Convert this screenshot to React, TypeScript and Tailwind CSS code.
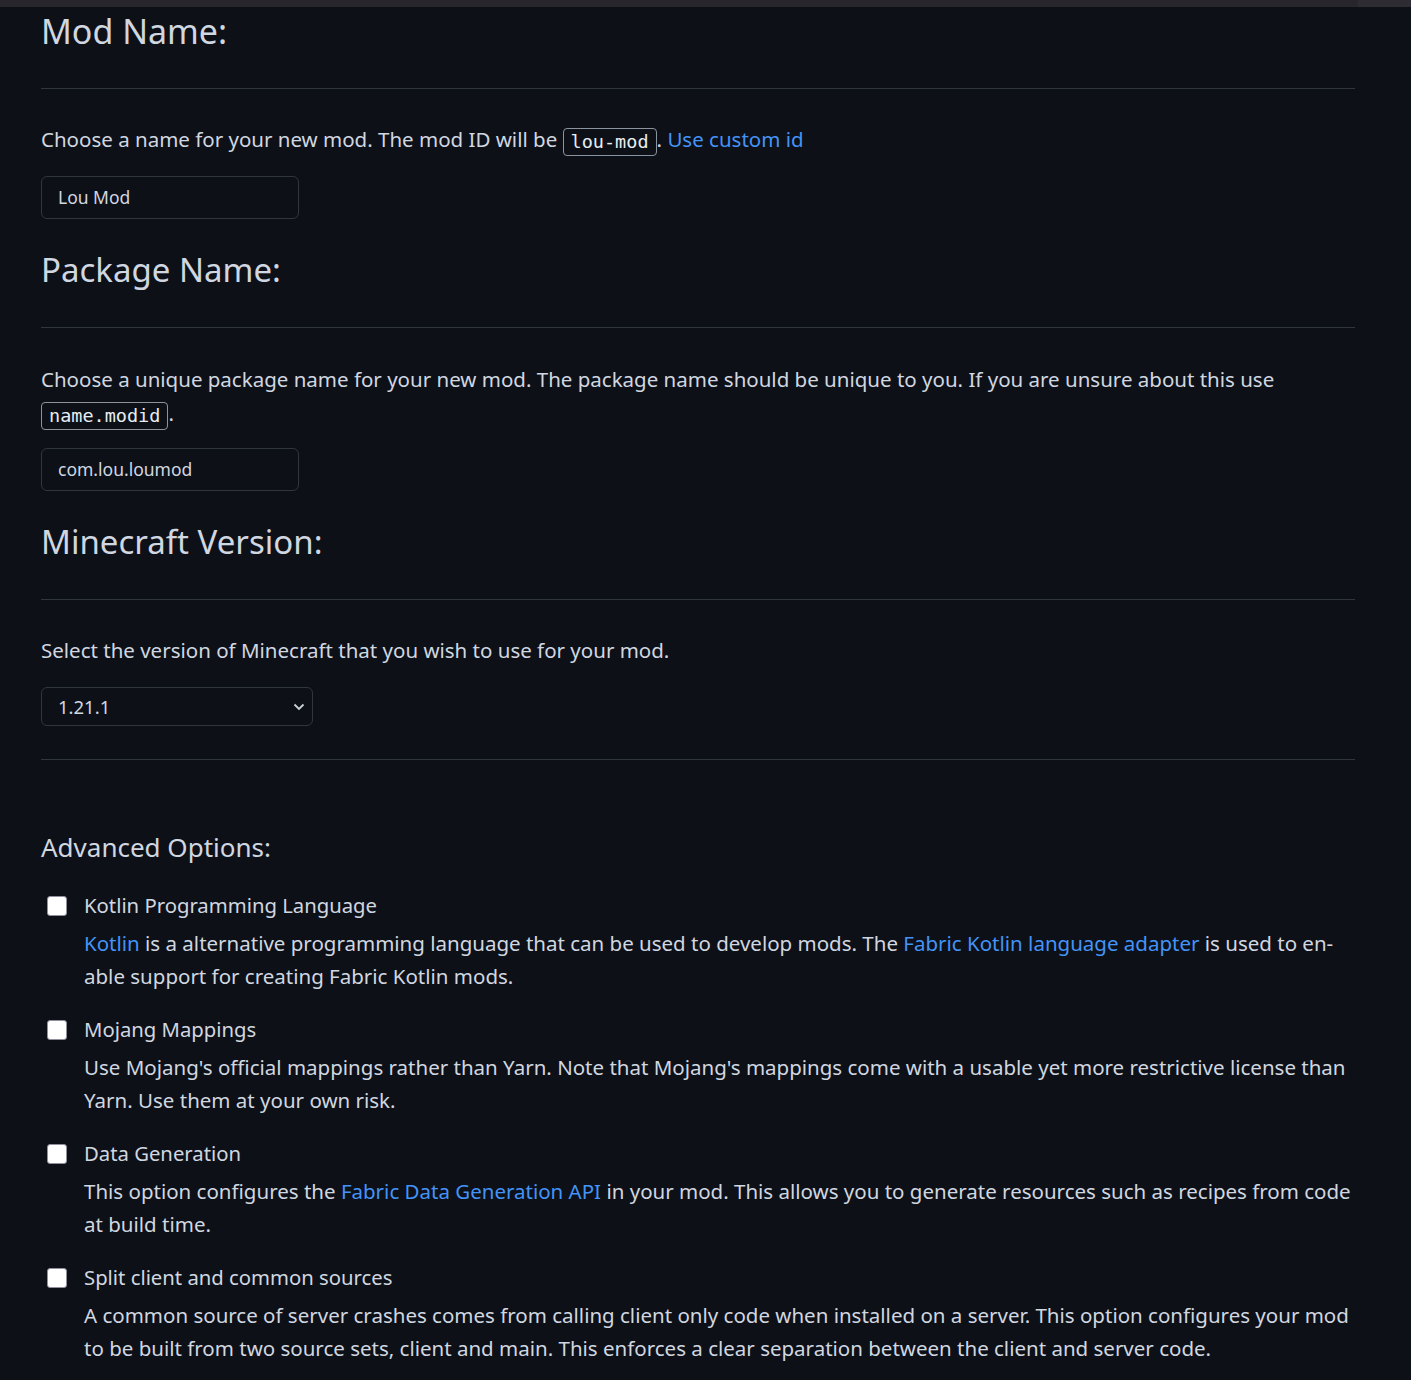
import React from "react";

const font = { fontFamily: '"Noto Sans", "Open Sans", sans-serif' };
const mono = { fontFamily: '"DejaVu Sans Mono", "Liberation Mono", monospace' };

function Code({ children }: { children: React.ReactNode }) {
  return (
    <code
      style={mono}
      className="inline-block rounded-[4px] border border-[#8b949e] px-[7px] text-[18.5px] leading-[26px] text-[#e6edf3] align-middle"
    >
      {children}
    </code>
  );
}

function Heading({ children, first }: { children: React.ReactNode; first?: boolean }) {
  return (
    <div
      className={`${first ? "mt-[2px] text-[34px]" : "mt-[29px] text-[33px]"} border-b border-[#30363d] pb-[35px] leading-[44px] text-[#d1d7e0]`}
    >
      {children}
    </div>
  );
}

function TextInput({ value }: { value: string }) {
  return (
    <div className="mt-[20px] flex h-[43px] w-[258px] items-center rounded-[6px] border border-[#30363d] bg-[#0d1117] px-[16px] text-[17.5px] text-[#d1d7e0]">
      {value}
    </div>
  );
}

function Option({
  label,
  children,
  first,
}: {
  label: string;
  children: React.ReactNode;
  first?: boolean;
}) {
  return (
    <div className={first ? "mt-[24px]" : "mt-[20px]"}>
      <div className="flex items-center">
        <div className="ml-[6px] mr-[17px] h-[20px] w-[20px] rounded-[3px] border-[1.5px] border-[#8f8f9d] bg-white" />
        <span className="text-[20.3px] leading-[33px] text-[#d1d7e0]">{label}</span>
      </div>
      <div className="mt-[5px] pl-[43px] text-[20.5px] leading-[33px] text-[#d1d7e0] whitespace-nowrap">
        {children}
      </div>
    </div>
  );
}

const A = ({ children }: { children: React.ReactNode }) => (
  <span className="text-[#4493f8]">{children}</span>
);

export default function App() {
  return (
    <div style={font} className="min-h-[1380px] w-full bg-[#0d1117] text-[#d1d7e0]">
      <div className="flex h-[7px] w-full">
        <div className="h-full flex-1 bg-[#27262c]" />
        <div className="h-full w-[53px] bg-[#2d2c33]" />
      </div>
      <div className="w-[1314px] pl-[41px] box-content">
        <Heading first>Mod Name:</Heading>
        <p className="mt-[34px] text-[20.5px] leading-[33px]">
          Choose a name for your new mod. The mod ID will be <Code>lou-mod</Code>.{" "}
          <A>Use custom id</A>
        </p>
        <TextInput value="Lou Mod" />

        <Heading>Package Name:</Heading>
        <p className="mt-[34px] text-[20.5px] leading-[34px]">
          Choose a unique package name for your new mod. The package name should be unique to you. If you are unsure about this use
          <br />
          <Code>name.modid</Code>.
        </p>
        <div className="-mt-[2px]">
          <TextInput value="com.lou.loumod" />
        </div>

        <Heading>Minecraft Version:</Heading>
        <p className="mt-[34px] text-[20.5px] leading-[33px]">
          Select the version of Minecraft that you wish to use for your mod.
        </p>
        <div className="mt-[20px] flex h-[39px] w-[272px] items-center justify-between rounded-[6px] border border-[#30363d] pl-[16px] pr-[7px] text-[18.5px] text-[#d1d7e0]">
          <span>1.21.1</span>
          <svg width="12" height="8" viewBox="0 0 12 8" fill="none">
            <path d="M1.5 1.5 L6 6 L10.5 1.5" stroke="#c9d1d9" strokeWidth="1.8" />
          </svg>
        </div>
        <div className="mt-[33px] h-px w-full bg-[#30363d]" />

        <div className="mt-[69px] text-[26px] leading-[36px] text-[#d1d7e0]">Advanced Options:</div>

        <Option first label="Kotlin Programming Language">
          <A>Kotlin</A> is a alternative programming language that can be used to develop mods. The{" "}
          <A>Fabric Kotlin language adapter</A> is used to en-
          <br />
          able support for creating Fabric Kotlin mods.
        </Option>
        <Option label="Mojang Mappings">
          Use Mojang's official mappings rather than Yarn. Note that Mojang's mappings come with a usable yet more restrictive license than
          <br />
          Yarn. Use them at your own risk.
        </Option>
        <Option label="Data Generation">
          This option configures the <A>Fabric Data Generation API</A> in your mod. This allows you to generate resources such as recipes from code
          <br />
          at build time.
        </Option>
        <Option label="Split client and common sources">
          A common source of server crashes comes from calling client only code when installed on a server. This option configures your mod
          <br />
          to be built from two source sets, client and main. This enforces a clear separation between the client and server code.
        </Option>
      </div>
    </div>
  );
}
